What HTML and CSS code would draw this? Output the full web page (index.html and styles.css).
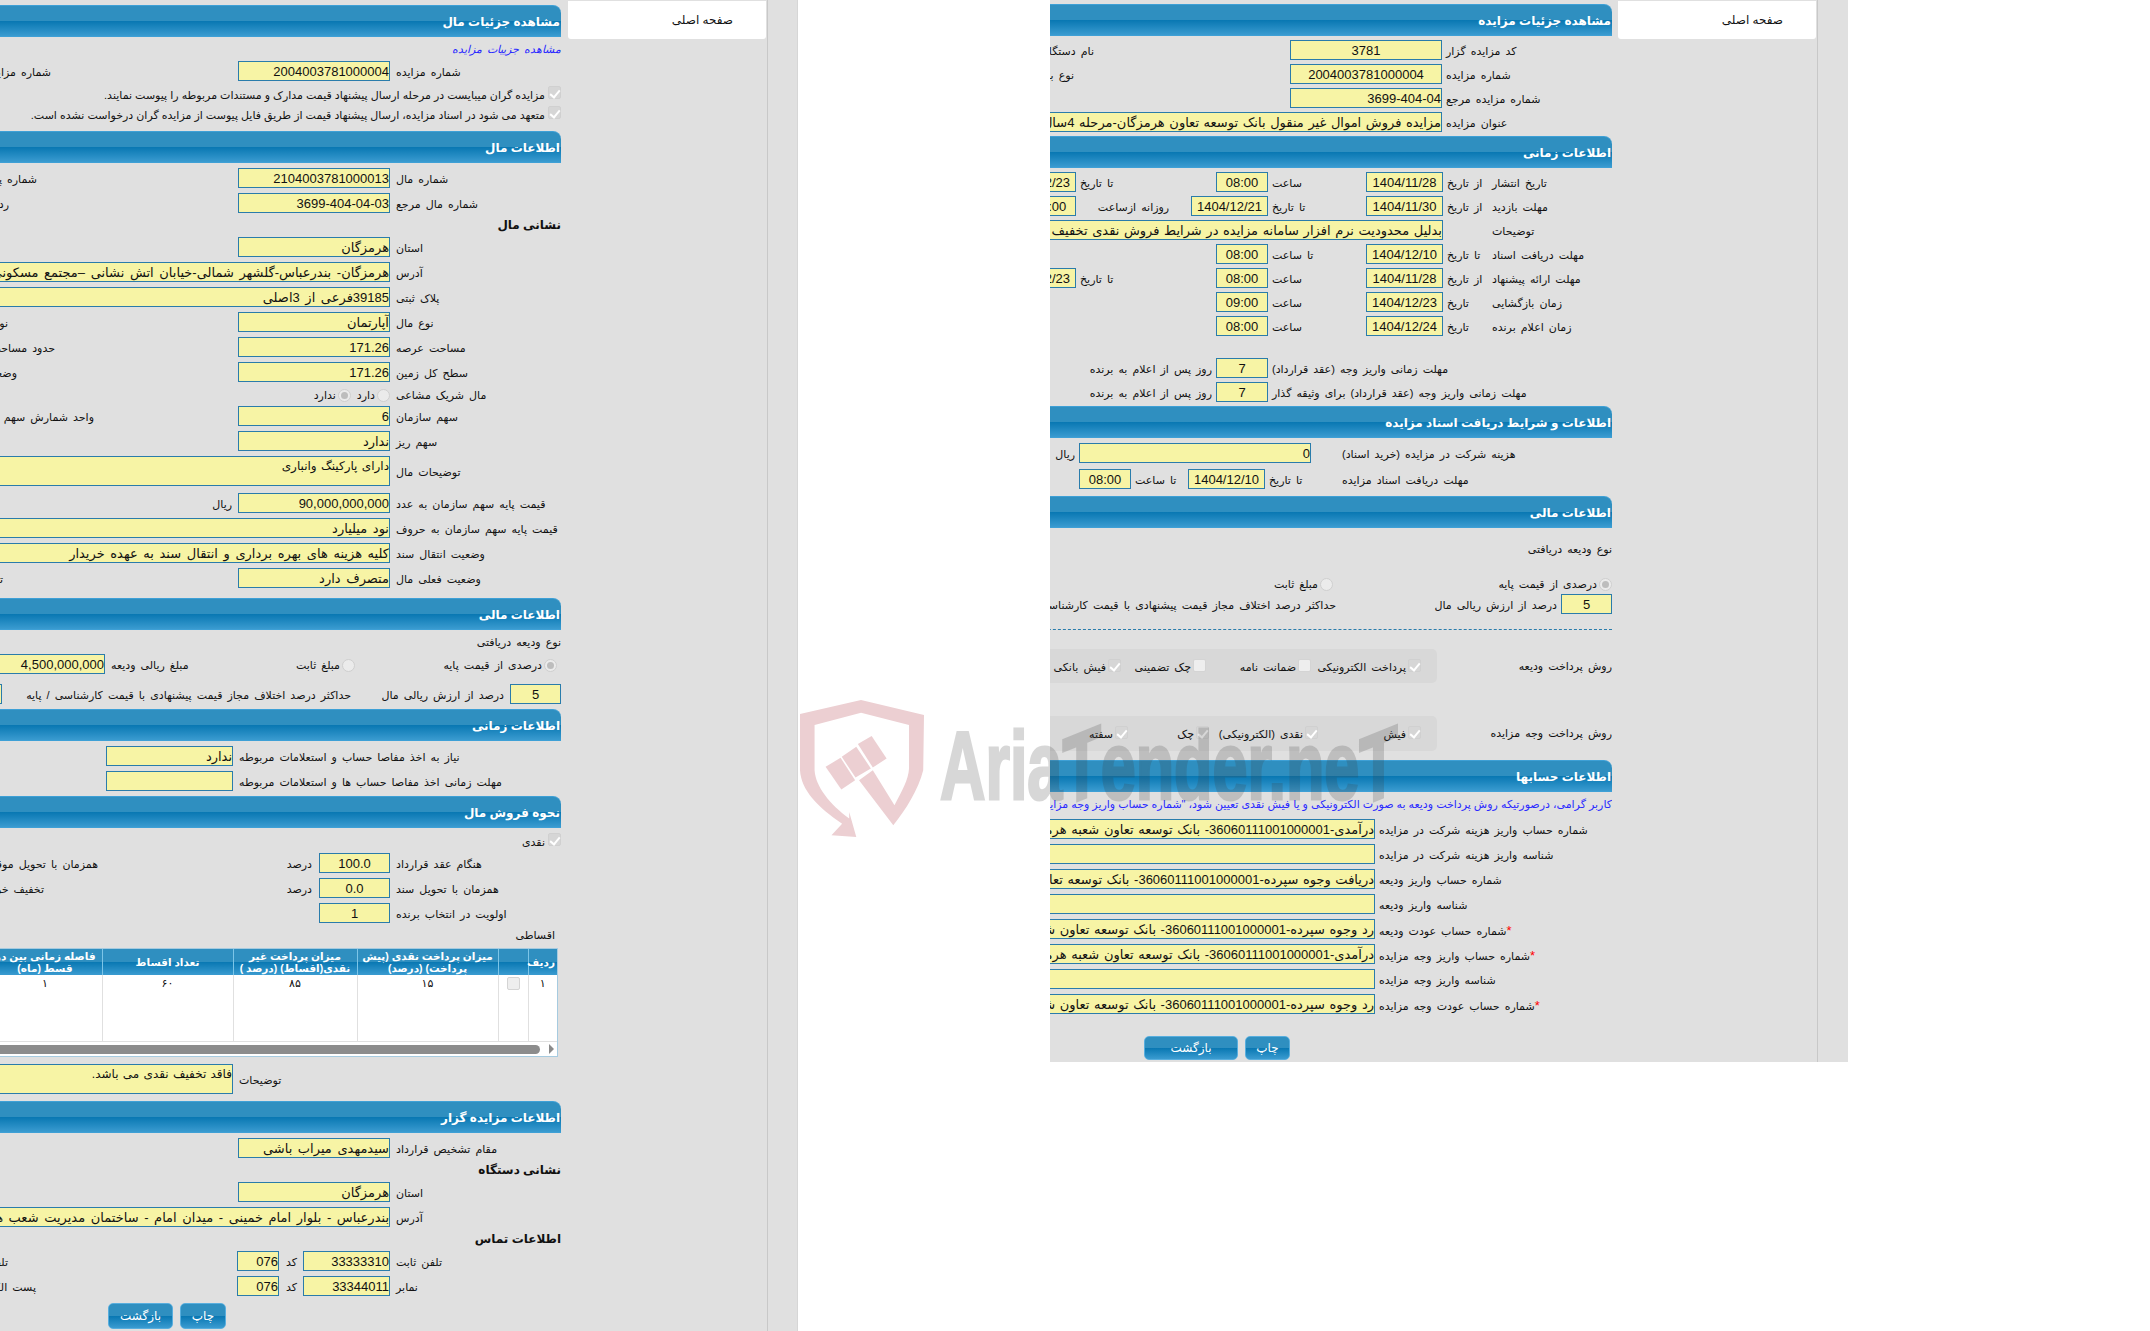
FILE: index.html
```html
<!DOCTYPE html>
<html lang="fa">
<head>
    <meta charset="UTF-8">
    <title>مشاهده جزئیات مزایده</title>
    <link rel="stylesheet" href="styles.css">
</head>
<body>
    <!-- first tile: property details -->
    <section class="frame frame-a" dir="rtl">
        <aside class="menu-col"><div class="menu-box">صفحه اصلی</div></aside>
        <main class="main">
            <div class="sheet">
                <h2 class="bar">مشاهده جزئیات مال</h2>
                <a class="link">مشاهده جزییات مزایده</a>
                <div class="row"><span class="lbl">شماره مزایده</span><div class="fld w152">2004003781000004</div><span class="side m181">شماره مزایده مرجع</span></div>
                <label class="chk-row"><i class="chk on"></i>مزایده گران میبایست در مرحله ارسال پیشنهاد قیمت مدارک و مستندات مربوطه را پیوست نمایند.</label>
                <label class="chk-row"><i class="chk on"></i>متعهد می شود در اسناد مزایده، ارسال پیشنهاد قیمت از طریق فایل پیوست از مزایده گران درخواست نشده است.</label>

                <h2 class="bar mt5">اطلاعات مال</h2>
                <div class="row"><span class="lbl">شماره مال</span><div class="fld w152">2104003781000013</div><span class="side m195">شماره پلاک</span></div>
                <div class="row"><span class="lbl">شماره مال مرجع</span><div class="fld w152">3699-404-04-03</div><span class="side m223">ردیف</span></div>
                <h3 class="title">نشانی مال</h3>
                <div class="row"><span class="lbl">استان</span><div class="fld w152">هرمزگان</div></div>
                <div class="row"><span class="lbl">آدرس</span><div class="fld wide">هرمزگان- بندرعباس-گلشهر شمالی-خیابان اتش نشانی –مجتمع مسکونی بهاران-طبقه دوم-واحد شمالی</div></div>
                <div class="row"><span class="lbl">پلاک ثبتی</span><div class="fld wide">39185فرعی از 3اصلی</div></div>
                <div class="row"><span class="lbl">نوع مال</span><div class="fld w152">آپارتمان</div><span class="side m224">نوع کاربری</span></div>
                <div class="row"><span class="lbl">مساحت عرصه</span><div class="fld w152">171.26</div><span class="side m177">حدود مساحت</span></div>
                <div class="row"><span class="lbl">سطح کل زمین</span><div class="fld w152">171.26</div><span class="side m215">وضعیت</span></div>
                <div class="row thin">
                    <span class="lbl">مال شریک مشاعی</span>
                    <span class="opt"><i class="radio"></i>دارد</span>
                    <span class="opt"><i class="radio on"></i>ندارد</span>
                </div>
                <div class="row"><span class="lbl">سهم سازمان</span><div class="fld w152">6</div><span class="side m138">واحد شمارش سهم</span></div>
                <div class="row"><span class="lbl">سهم ریز</span><div class="fld w152">ندارد</div></div>
                <div class="row tall"><span class="lbl">توضیحات مال</span><div class="fld wide">دارای پارکینگ وانباری</div></div>
                <div class="row mt2"><span class="lbl">قیمت پایه سهم سازمان به عدد</span><div class="fld w152">90,000,000,000</div><span>ریال</span></div>
                <div class="row"><span class="lbl">قیمت پایه سهم سازمان به حروف</span><div class="fld wide">نود میلیارد</div></div>
                <div class="row"><span class="lbl">وضعیت انتقال سند</span><div class="fld wide">کلیه هزینه های بهره برداری و انتقال سند به عهده خریدار</div></div>
                <div class="row"><span class="lbl">وضعیت فعلی مال</span><div class="fld w152">متصرف دارد</div><span class="side m229">تصرف</span></div>

                <h2 class="bar mt5">اطلاعات مالی</h2>
                <p class="note">نوع ودیعه دریافتی</p>
                <div class="row">
                    <span class="opt cell-a1"><i class="radio on"></i>درصدی از قیمت پایه</span>
                    <span class="opt cell-a2"><i class="radio"></i>مبلغ ثابت</span>
                    <span class="cell-a3">مبلغ ریالی ودیعه</span>
                    <div class="fld wide">4,500,000,000</div>
                </div>
                <div class="row mt5">
                    <div class="fld w51 mid">5</div>
                    <span class="cell-a4">درصد از ارزش ریالی مال</span>
                    <span class="cell-a5">حداکثر درصد اختلاف مجاز قیمت پیشنهادی با قیمت کارشناسی / پایه</span>
                    <div class="fld wide"></div>
                </div>

                <h2 class="bar">اطلاعات زمانی</h2>
                <div class="row"><span class="lbl lbl-long">نیاز به اخذ مفاصا حساب و استعلامات مربوطه</span><div class="fld w127">ندارد</div></div>
                <div class="row"><span class="lbl lbl-long">مهلت زمانی اخذ مفاصا حساب ها و استعلامات مربوطه</span><div class="fld w127"></div></div>

                <h2 class="bar">نحوه فروش مال</h2>
                <label class="chk-row"><i class="chk on"></i>نقدی</label>
                <div class="row"><span class="lbl">هنگام عقد قرارداد</span><div class="fld w71 mid">100.0</div><span class="unit">درصد</span><span class="side m182">همزمان با تحویل موقت</span></div>
                <div class="row"><span class="lbl">همزمان با تحویل سند</span><div class="fld w71 mid">0.0</div><span class="unit">درصد</span><span class="side m236">تخفیف خرید</span></div>
                <div class="row"><span class="lbl">اولویت در انتخاب برنده</span><div class="fld w71 mid">1</div></div>
                <p class="note note-in">اقساطی</p>

                <div class="grid-box mt1">
                    <table class="grid">
                        <thead>
                            <tr>
                                <th class="c1">ردیف</th>
                                <th class="c2"></th>
                                <th class="c3">میزان پرداخت نقدی (پیش پرداخت) (درصد)</th>
                                <th class="c4">میزان پرداخت غیر نقدی(اقساط) (درصد )</th>
                                <th class="c5">تعداد اقساط</th>
                                <th class="c6">فاصله زمانی بین دو قسط (ماه)</th>
                                <th></th>
                            </tr>
                        </thead>
                        <tbody>
                            <tr>
                                <td>۱</td>
                                <td><i class="chk blank"></i></td>
                                <td>۱۵</td>
                                <td>۸۵</td>
                                <td>۶۰</td>
                                <td>۱</td>
                                <td></td>
                            </tr>
                        </tbody>
                    </table>
                    <div class="scroll"><i class="scroll-arrow"></i><i class="scroll-thumb"></i></div>
                </div>

                <div class="row tall mt2"><span class="lbl lbl-long">توضیحات</span><div class="fld wide">فاقد تخفیف نقدی می باشد.</div></div>

                <h2 class="bar mt2">اطلاعات مزایده گزار</h2>
                <div class="row"><span class="lbl">مقام تشخیص قرارداد</span><div class="fld w152">سیدمهدی میراب باشی</div></div>
                <h3 class="title">نشانی دستگاه</h3>
                <div class="row"><span class="lbl">استان</span><div class="fld w152">هرمزگان</div></div>
                <div class="row"><span class="lbl">آدرس</span><div class="fld wide">بندرعباس - بلوار امام خمینی - میدان امام - ساختمان مدیریت شعب هرمزگان</div></div>
                <h3 class="title">اطلاعات تماس</h3>
                <div class="row"><span class="lbl">تلفن ثابت</span><div class="fld w87">33333310</div><span class="code">کد</span><div class="fld w42">076</div><span class="side m223">تلفن همراه</span></div>
                <div class="row"><span class="lbl">نمابر</span><div class="fld w87">33344011</div><span class="code">کد</span><div class="fld w42">076</div><span class="side m195">پست الکترونیکی</span></div>
                <div class="btns btns-a mt2"><button class="btn print-a">چاپ</button><button class="btn back-a">بازگشت</button></div>
            </div>
        </main>
    </section>

    <!-- second tile: auction details -->
    <section class="frame frame-b" dir="rtl">
        <div class="sheet-wrap">
            <aside class="menu-col"><div class="menu-box">صفحه اصلی</div></aside>
            <main class="main">
                <div class="sheet tight">
                    <h2 class="bar">مشاهده جزئیات مزایده</h2>
                    <div class="row"><span class="lbl">کد مزایده گزار</span><div class="fld w152 mid">3781</div><span class="side m192">نام دستگاه</span></div>
                    <div class="row"><span class="lbl">شماره مزایده</span><div class="fld w152 mid">2004003781000004</div><span class="side m212">نوع برگزاری</span></div>
                    <div class="row"><span class="lbl">شماره مزایده مرجع</span><div class="fld w152">3699-404-04</div></div>
                    <div class="row"><span class="lbl">عنوان مزایده</span><div class="fld wide">مزایده فروش اموال غیر منقول بانک توسعه تعاون هرمزگان-مرحله 4سال1404</div></div>

                    <h2 class="bar">اطلاعات زمانی</h2>
                    <div class="row"><span class="t1">تاریخ انتشار</span><span class="t2">از تاریخ</span><div class="fld w77 mid">1404/11/28</div><span class="t3">ساعت</span><div class="fld w52 mid">08:00</div><span class="t4">تا تاریخ</span><div class="fld w77 mid">1404/12/23</div></div>
                    <div class="row"><span class="t1">مهلت بازدید</span><span class="t2">از تاریخ</span><div class="fld w77 mid">1404/11/30</div><span class="t3">تا تاریخ</span><div class="fld w77 mid">1404/12/21</div><span class="t6">روزانه ازساعت</span><div class="fld w52 mid">08:00</div></div>
                    <div class="row"><span class="t1">توضیحات</span><span class="t2"></span><div class="fld wide">بدلیل محدودیت نرم افزار سامانه مزایده در شرایط فروش نقدی تخفیف دارد</div></div>
                    <div class="row"><span class="t1">مهلت دریافت اسناد</span><span class="t2">تا تاریخ</span><div class="fld w77 mid">1404/12/10</div><span class="t3">تا ساعت</span><div class="fld w52 mid">08:00</div></div>
                    <div class="row"><span class="t1">مهلت ارائه پیشنهاد</span><span class="t2">از تاریخ</span><div class="fld w77 mid">1404/11/28</div><span class="t3">ساعت</span><div class="fld w52 mid">08:00</div><span class="t4">تا تاریخ</span><div class="fld w77 mid">1404/12/23</div></div>
                    <div class="row"><span class="t1">زمان بازگشایی</span><span class="t2">تاریخ</span><div class="fld w77 mid">1404/12/23</div><span class="t3">ساعت</span><div class="fld w52 mid">09:00</div></div>
                    <div class="row"><span class="t1">زمان اعلام برنده</span><span class="t2">تاریخ</span><div class="fld w77 mid">1404/12/24</div><span class="t3">ساعت</span><div class="fld w52 mid">08:00</div></div>
                    <div class="row mt18"><span class="t7">مهلت زمانی واریز وجه (عقد قرارداد)</span><div class="fld w52 mid">7</div><span>روز پس از اعلام به برنده</span></div>
                    <div class="row"><span class="t7">مهلت زمانی واریز وجه (عقد قرارداد) برای وثیقه گذار</span><div class="fld w52 mid">7</div><span>روز پس از اعلام به برنده</span></div>

                    <h2 class="bar">اطلاعات و شرایط دریافت اسناد مزایده</h2>
                    <div class="row cost mt1"><span class="t8">هزینه شرکت در مزایده (خرید اسناد)</span><div class="fld w232">0</div><span>ریال</span></div>
                    <div class="row mt2"><span class="t8">مهلت دریافت اسناد مزایده</span><span class="t9">تا تاریخ</span><div class="fld w77 mid">1404/12/10</div><span class="t10">تا ساعت</span><div class="fld w52 mid">08:00</div></div>

                    <h2 class="bar mt3">اطلاعات مالی</h2>
                    <p class="note mt10">نوع ودیعه دریافتی</p>
                    <div class="row thin mt16"><span class="opt cell-b1"><i class="radio on"></i>درصدی از قیمت پایه</span><span class="opt"><i class="radio"></i>مبلغ ثابت</span></div>
                    <div class="row"><div class="fld w51 mid">5</div><span class="cell-b2">درصد از ارزش ریالی مال</span><span class="cell-b3">حداکثر درصد اختلاف مجاز قیمت پیشنهادی با قیمت کارشناسی</span></div>
                    <hr class="dash">
                    <div class="pay mt15">
                        <span class="pay-lbl">روش پرداخت ودیعه</span>
                        <div class="pay-box">
                            <span class="pay-item p110"><i class="chk on"></i>پرداخت الکترونیکی</span>
                            <span class="pay-item p105"><i class="chk blank"></i>ضمانت نامه</span>
                            <span class="pay-item p85"><i class="chk blank"></i>چک تضمینی</span>
                            <span class="pay-item"><i class="chk on"></i>فیش بانکی</span>
                        </div>
                    </div>
                    <div class="pay pay-high mt29">
                        <span class="pay-lbl">روش پرداخت وجه مزایده</span>
                        <div class="pay-box">
                            <span class="pay-item p103"><i class="chk on"></i>فیش</span>
                            <span class="pay-item p109"><i class="chk on"></i>نقدی (الکترونیکی)</span>
                            <span class="pay-item p81"><i class="chk on"></i>چک</span>
                            <span class="pay-item"><i class="chk on"></i>سفته</span>
                        </div>
                    </div>

                    <h2 class="bar mt5">اطلاعات حسابها</h2>
                    <p class="note blue mt1">کاربر گرامی، درصورتیکه روش پرداخت ودیعه به صورت الکترونیکی و یا فیش نقدی تعیین شود، "شماره حساب واریز وجه مزایده" و "شناسه واریز" الزامی است.</p>
                    <div class="accounts mt4">
                        <div class="row"><span class="lbl acc">شماره حساب واریز هزینه شرکت در مزایده</span><div class="fld wide">درآمدی-36060111001000001- بانک توسعه تعاون شعبه هرمزگان</div></div>
                        <div class="row"><span class="lbl acc">شناسه واریز هزینه شرکت در مزایده</span><div class="fld wide"></div></div>
                        <div class="row"><span class="lbl acc">شماره حساب واریز ودیعه</span><div class="fld wide">دریافت وجوه سپرده-36060111001000001- بانک توسعه تعاون شعبه هرمزگان</div></div>
                        <div class="row"><span class="lbl acc">شناسه واریز ودیعه</span><div class="fld wide"></div></div>
                        <div class="row"><span class="lbl acc"><b class="req">*</b>شماره حساب عودت ودیعه</span><div class="fld wide">رد وجوه سپرده-36060111001000001- بانک توسعه تعاون شعبه هرمزگان</div></div>
                        <div class="row"><span class="lbl acc"><b class="req">*</b>شماره حساب واریز وجه مزایده</span><div class="fld wide">درآمدی-36060111001000001- بانک توسعه تعاون شعبه هرمزگان</div></div>
                        <div class="row"><span class="lbl acc">شناسه واریز وجه مزایده</span><div class="fld wide"></div></div>
                        <div class="row"><span class="lbl acc"><b class="req">*</b>شماره حساب عودت وجه مزایده</span><div class="fld wide">رد وجوه سپرده-36060111001000001- بانک توسعه تعاون شعبه هرمزگان</div></div>
                    </div>
                    <div class="btns btns-b mt18"><button class="btn print-b">چاپ</button><button class="btn back-b">بازگشت</button></div>
                </div>
            </main>
        </div>

        <!-- site watermark, sits over the page -->
        <div class="watermark" dir="ltr">
            <svg class="wm-shield" viewBox="25 30 315 410" preserveAspectRatio="none">
                <path d="M25,72 L180,30 L340,75 L338,240 C325,300 295,355 262,405 L175,270 L210,240 L265,345 C285,300 300,270 302,235 L302,105 L180,68 L62,105 L62,240 C65,290 100,340 150,385 L150,365 L168,440 L105,435 L132,400 C70,350 28,300 25,240 Z"/>
                <path d="M90,230 L128,203 L165,270 L130,298 Z"/>
                <path d="M131,200 L168,170 L205,235 L166,262 Z"/>
                <path d="M172,162 L207,138 L245,205 L210,232 Z"/>
            </svg>
            <span class="wm-text">Aria<b class="wm-t">T</b>ender.ne<b class="wm-t">T</b></span>
        </div>
    </section>
</body>
</html>
```

FILE: styles.css
```css
* {
    margin: 0;
    padding: 0;
    box-sizing: border-box;
}

body {
    display: flex;
    align-items: flex-start;
    height: 1331px;
    overflow: hidden;
    background: white;
    color: #111;
    font-family: "Liberation Sans", "DejaVu Sans", sans-serif;
    font-size: 11px;
    word-spacing: 2px;
}

/* tiles */
.frame {
    position: relative;
    display: flex;
    flex: none;
}

.frame-a {
    width: 798px;
    height: 1331px;
    padding-right: 29px;
    border-right: 1px solid #d6d6d6;
    background: #e0e0e0;
}

.frame-b {
    width: 1050px;
    height: 1331px;
    background: white;
}

.sheet-wrap {
    display: flex;
    width: 798px;
    height: 1062px;
    padding-right: 30px;
    background: #e0e0e0;
}

.menu-col {
    flex: none;
    width: 200px;
    border-right: 1px solid #c8c8c8;
    padding: 1px 1px 0 0;
    margin-left: 6px;
}

.frame-a .menu-col {
    margin-left: 7px;
}

.menu-box {
    height: 38px;
    line-height: 38px;
    padding-right: 33px;
    font-size: 12px;
    word-spacing: 0;
    background: white;
    border-radius: 0 0 3px 3px;
}

.main {
    flex: 1;
    overflow: hidden;
    min-width: 0;
}

.sheet {
    display: flex;
    flex-direction: column;
    gap: 5px;
    width: 1000px;
    padding-top: 5px;
}

.tight {
    gap: 4px;
    padding-top: 4px;
}

/* section bar */
.bar {
    height: 32px;
    line-height: 33px;
    flex: none;
    padding-right: 1px;
    color: white;
    font-size: 12px;
    font-weight: bold;
    word-spacing: 0;
    border-radius: 0 8px 0 0;
    border-top: 1px solid #3ea0d6;
    border-bottom: 1px solid #3ea0d6;
    background: linear-gradient(to bottom, #2f8fc0 0, #2f8fc0 50%, #0877b2 50%, #3a9bd0 100%);
}

.link {
    height: 14px;
    line-height: 14px;
    color: #2a2aff;
    font-style: italic;
}

.title {
    height: 14px;
    line-height: 14px;
    font-size: 12px;
    font-weight: bold;
    word-spacing: 0;
    color: #111;
}

.note {
    height: 14px;
    line-height: 14px;
    white-space: nowrap;
}

.note-in {
    padding-right: 6px;
}

.blue {
    color: #2a2aff;
    word-spacing: 0;
}

/* form rows */
.row {
    display: flex;
    align-items: center;
    gap: 6px;
    height: 20px;
    flex: none;
    white-space: nowrap;
}

.row > span {
    padding-top: 2px;
}

.tight .row {
    gap: 4px;
}

.thin {
    height: 14px;
}

.tall {
    height: 30px;
}

.lbl {
    flex: none;
    width: 165px;
    text-align: left;
}

.lbl-long {
    width: 322px;
}

.tight .lbl {
    width: 166px;
}

.tight .lbl.acc {
    width: 233px;
}

.fld {
    flex: none;
    height: 20px;
    line-height: 19px;
    overflow: hidden;
    white-space: nowrap;
    border: 1px solid #2a7cab;
    background: #f7f4a5;
    color: #111;
    font-size: 13px;
    text-align: right;
}

.tight .fld {
    word-spacing: 1px;
}

.tall .fld {
    height: 30px;
    font-size: 12px;
    word-spacing: 1px;
}

.mid {
    text-align: center;
}

.wide {
    width: 800px;
}

.w42 { width: 42px; }
.w51 { width: 51px; }
.w52 { width: 52px; }
.w71 { width: 71px; }
.w77 { width: 77px; }
.w87 { width: 87px; }
.w127 { width: 127px; }
.w152 { width: 152px; }
.w232 { width: 232px; }

/* labels of the second column, the tile cuts them off */
.m138 { margin-right: 138px; }
.m177 { margin-right: 177px; }
.m181 { margin-right: 181px; }
.m182 { margin-right: 182px; }
.m192 { margin-right: 192px; }
.m195 { margin-right: 195px; }
.m212 { margin-right: 212px; }
.m215 { margin-right: 215px; }
.m223 { margin-right: 223px; }
.m224 { margin-right: 224px; }
.m229 { margin-right: 229px; }
.m236 { margin-right: 236px; }

.mt1 { margin-top: 1px; }
.mt2 { margin-top: 2px; }
.mt3 { margin-top: 3px; }
.mt4 { margin-top: 4px; }
.mt5 { margin-top: 5px; }
.mt10 { margin-top: 10px; }
.mt15 { margin-top: 15px; }
.mt16 { margin-top: 16px; }
.mt18 { margin-top: 18px; }
.mt29 { margin-top: 29px; }

.unit {
    flex: none;
    width: 26px;
    margin-right: 1px;
}

.code {
    flex: none;
    width: 12px;
}

.opt {
    display: flex;
    align-items: center;
    gap: 2px;
}

.cell-a1 {
    width: 196px;
    margin-right: 4px;
    flex: none;
}

.cell-a2 {
    width: 156px;
    flex: none;
}

.cell-a3 {
    width: 82px;
    flex: none;
    text-align: left;
}

.cell-a4 {
    width: 147px;
    flex: none;
}

.cell-a5 {
    width: 343px;
    flex: none;
}

.cell-b1 {
    width: 275px;
    flex: none;
}

.cell-b2 {
    width: 217px;
    flex: none;
}

/* auction time table */
.t1 { width: 120px; flex: none; text-align: left; }
.t2 { width: 41px; flex: none; text-align: left; }
.t3 { width: 90px; flex: none; text-align: left; }
.t4 { width: 132px; flex: none; text-align: left; }
.t6 { width: 107px; flex: none; text-align: center; }
.t7 { width: 340px; flex: none; text-align: left; }
.t8 { width: 270px; flex: none; text-align: left; }
.t9 { width: 69px; flex: none; text-align: left; }
.t10 { width: 49px; flex: none; text-align: left; }

.cost .t8 {
    margin-left: 27px;
}

.dash {
    border: 0;
    border-top: 1px dashed #2a7cab;
    margin-top: 11px;
    flex: none;
}

/* payment method boxes */
.pay {
    display: flex;
    align-items: center;
    height: 34px;
    flex: none;
}

.pay-high {
    height: 35px;
}

.pay-lbl {
    flex: none;
    width: 175px;
}

.pay-box {
    flex: 1;
    align-self: stretch;
    display: flex;
    padding: 10px 16px 0 0;
    background: #d8d8d8;
    border-radius: 5px;
    white-space: nowrap;
}

.pay-item {
    display: flex;
    align-items: flex-start;
    gap: 2px;
    line-height: 17px;
    flex: none;
}

.p81 { width: 81px; }
.p85 { width: 85px; }
.p103 { width: 103px; }
.p105 { width: 105px; }
.p109 { width: 109px; }
.p110 { width: 110px; }

.accounts {
    display: flex;
    flex-direction: column;
    gap: 5px;
}

.req {
    color: red;
    font-size: 13px;
    font-weight: normal;
}

/* disabled controls */
.chk {
    flex: none;
    position: relative;
    display: inline-block;
    width: 13px;
    height: 13px;
    border-radius: 2px;
    background: #d6d6d6;
    border: 1px solid #d0d0d0;
}

.chk.on::after {
    content: "";
    position: absolute;
    left: 3px;
    top: 1px;
    width: 4px;
    height: 8px;
    border: solid white;
    border-width: 0 2px 2px 0;
    transform: rotate(40deg);
}

.chk.blank {
    background: #eeeeee;
    border-color: #d4d4d4;
}

.radio {
    flex: none;
    position: relative;
    display: inline-block;
    width: 13px;
    height: 13px;
    border-radius: 50%;
    background: #ebebeb;
    border: 1px solid #cfcfcf;
}

.radio.on::after {
    content: "";
    position: absolute;
    left: 2px;
    top: 2px;
    width: 7px;
    height: 7px;
    border-radius: 50%;
    background: #bdbdbd;
}

.chk-row {
    display: flex;
    align-items: flex-start;
    gap: 3px;
    height: 15px;
    line-height: 18px;
    flex: none;
    white-space: nowrap;
    word-spacing: 0;
}

/* installments grid */
.grid-box {
    flex: none;
    width: 700px;
    height: 109px;
    margin-right: 3px;
    overflow: hidden;
    border: 1px solid #a6cbe0;
    background: white;
}

.grid {
    width: 700px;
    table-layout: fixed;
    border-collapse: collapse;
}

.grid th {
    height: 26px;
    padding: 0 2px;
    color: white;
    font-size: 10.5px;
    font-weight: bold;
    line-height: 12px;
    word-spacing: 0;
    border-left: 1px solid #7cc5e8;
    background: linear-gradient(to bottom, #2f8fc0 0, #2f8fc0 50%, #0877b2 50%, #3a9bd0 100%);
}

.grid td {
    height: 66px;
    vertical-align: top;
    padding-top: 2px;
    text-align: center;
    border-left: 1px solid #e0e0e0;
    border-bottom: 1px solid #e0e0e0;
}

.c1 { width: 29px; }
.c2 { width: 30px; }
.c3 { width: 141px; }
.c4 { width: 124px; }
.c5 { width: 131px; }
.c6 { width: 114px; }

.scroll {
    display: flex;
    align-items: center;
    height: 15px;
    padding-right: 3px;
}

.scroll-arrow {
    flex: none;
    width: 0;
    height: 0;
    border-top: 5px solid transparent;
    border-bottom: 5px solid transparent;
    border-left: 5px solid #8a8a8a;
    margin-left: 9px;
}

.scroll-thumb {
    flex: 1;
    height: 9px;
    border-radius: 5px;
    background: #8c8c8c;
}

/* buttons */
.btns {
    display: flex;
    gap: 7px;
    flex: none;
}

.btns-a {
    margin-right: 335px;
}

.btns-b {
    margin-right: 322px;
}

.btn {
    height: 26px;
    color: white;
    font-family: inherit;
    font-size: 12px;
    border: 1px solid #58aede;
    border-radius: 5px;
    background: linear-gradient(to bottom, #2f8fc0 0, #2f8fc0 50%, #0877b2 50%, #3a9bd0 100%);
}

.btns-b .btn {
    height: 24px;
}

.print-a { width: 46px; }
.back-a { width: 65px; }
.print-b { width: 45px; }
.back-b { width: 94px; }

/* watermark */
.watermark {
    position: absolute;
    left: 2px;
    top: 700px;
    width: 600px;
    height: 140px;
    pointer-events: none;
}

.wm-shield {
    position: absolute;
    left: 0;
    top: 0;
    width: 124px;
    height: 137px;
    fill: #eccfd2;
}

.wm-text {
    position: absolute;
    left: 140px;
    top: 16px;
    display: block;
    font-size: 96px;
    line-height: 100px;
    font-weight: bold;
    font-family: "Liberation Sans", sans-serif;
    word-spacing: 0;
    color: #3c3c3c;
    opacity: 0.2;
    white-space: nowrap;
    transform: scaleX(0.655);
    transform-origin: left top;
    -webkit-text-stroke: 3px #3c3c3c;
}

/* the two T letters lean up to the right */
.wm-t {
    display: inline-block;
    transform: skewY(-15deg);
    transform-origin: 50% 85%;
}
```
